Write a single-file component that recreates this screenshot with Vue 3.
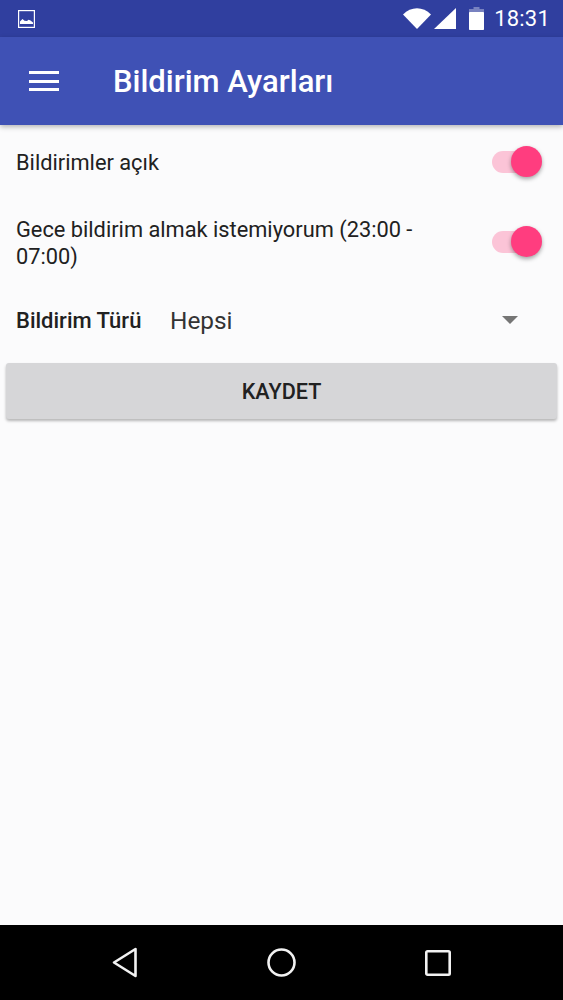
<script setup>
const settings = [
  { id: 1, label: 'Bildirimler açık' },
  { id: 2, label: 'Gece bildirim almak istemiyorum (23:00 - 07:00)' }
]
</script>

<template>
  <div class="screen">
    <div class="status">
      <svg class="pic" viewBox="0 0 17 18" width="17" height="18">
        <rect x="0.6" y="0.6" width="15.8" height="16.8" fill="none" stroke="#fff" stroke-width="1.2" />
        <path d="M2 14 V11.5 L4.5 9 L6.5 10.8 L9 11 L10.5 9.8 L12.5 10.5 L15 12.5 V14 Z" fill="#fff" />
      </svg>
      <div class="status-right">
        <svg class="wifi" viewBox="0 0 28 21" width="28" height="21">
          <path d="M0 6.5 C8 -2 20 -2 28 6.5 L14 21 Z" fill="#fff" />
        </svg>
        <svg class="signal" viewBox="0 0 22 21" width="22" height="21">
          <path d="M22 0 V21 H0 Z" fill="#fff" />
        </svg>
        <svg class="battery" viewBox="0 0 15 23" width="15" height="23">
          <path d="M4.5 0 H10.5 V2 H15 V7 H0 V2 H4.5 Z" fill="#fff" fill-opacity="0.35" />
          <rect x="0" y="5" width="15" height="18" rx="0.8" fill="#fff" />
        </svg>
        <span class="time">18:31</span>
      </div>
    </div>

    <header class="toolbar">
      <div class="burger"><i></i><i></i><i></i></div>
      <h1 class="title">Bildirim Ayarları</h1>
    </header>

    <main class="content">
      <div v-for="s in settings" :key="s.id" class="row" :class="'row-' + s.id">
        <span class="label">{{ s.label }}</span>
        <span class="switch"><span class="thumb"></span></span>
      </div>

      <div class="spinner-row">
        <span class="spinner-label">Bildirim Türü</span>
        <span class="spinner-value">Hepsi</span>
        <span class="arrow"></span>
      </div>

      <button class="save">KAYDET</button>
    </main>

    <nav class="navbar">
      <svg viewBox="0 0 26 31" width="26" height="31">
        <path d="M23.5 2 V29 L2 15.5 Z" fill="none" stroke="#f2f2f2" stroke-width="2.6" stroke-linejoin="round" />
      </svg>
      <svg viewBox="0 0 29 29" width="29" height="29">
        <circle cx="14.5" cy="14.5" r="13" fill="none" stroke="#f2f2f2" stroke-width="2.6" />
      </svg>
      <svg viewBox="0 0 26 26" width="26" height="26">
        <rect x="1.3" y="1.3" width="23.4" height="23.4" rx="1.2" fill="none" stroke="#f2f2f2" stroke-width="2.6" />
      </svg>
    </nav>
  </div>
</template>

<style>
html, body { margin: 0; padding: 0; }
</style>

<style scoped>
.screen {
  width: 563px;
  height: 1000px;
  display: flex;
  flex-direction: column;
  background: #fbfbfc;
  font-family: Roboto, "Liberation Sans", sans-serif;
  overflow: hidden;
}
.status {
  height: 37px;
  flex: none;
  background: #303f9f;
  display: flex;
  align-items: center;
  justify-content: space-between;
  padding: 0 13px 0 18px;
}
.status-right {
  display: flex;
  align-items: center;
}
.wifi { margin-right: 3px; }
.signal { margin-right: 13px; }
.battery { margin-right: 10px; }
.time {
  color: #fff;
  font-size: 22px;
  line-height: 37px;
  letter-spacing: 0.2px;
}
.toolbar {
  height: 88px;
  flex: none;
  background: #3f51b5;
  display: flex;
  align-items: center;
  padding-left: 29px;
  box-shadow: 0 2px 5px rgba(0, 0, 0, 0.28);
  position: relative;
}
.burger {
  width: 30px;
  display: flex;
  flex-direction: column;
  gap: 5.5px;
  margin-right: 54px;
}
.burger i {
  display: block;
  height: 3px;
  background: #fff;
}
.title {
  margin: 0;
  color: #fff;
  font-size: 31px;
  font-weight: 500;
  line-height: 36px;
  padding-top: 1px;
}
.content {
  flex: 1;
  display: flex;
  flex-direction: column;
}
.row {
  display: flex;
  align-items: center;
  justify-content: space-between;
  padding: 0 27px 0 16px;
  color: #212121;
}
.row-1 { height: 74px; }
.row-2 { height: 60px; margin-top: 14px; }
.row-2 .switch { margin-bottom: 3px; }
.label {
  font-size: 21.8px;
  line-height: 27px;
  width: 440px;
}
.switch {
  width: 44px;
  height: 22px;
  border-radius: 11px;
  background: #fbc4d7;
  position: relative;
  flex: none;
}
.thumb {
  position: absolute;
  right: -6px;
  top: -5px;
  width: 31px;
  height: 31px;
  border-radius: 50%;
  background: #ff3d7f;
  box-shadow: 0 2px 4px rgba(0, 0, 0, 0.35);
}
.spinner-row {
  height: 66px;
  margin-top: 14px;
  display: flex;
  align-items: center;
  padding-left: 16px;
  color: #212121;
}
.spinner-label {
  font-size: 22px;
  font-weight: 500;
  width: 154px;
}
.spinner-value {
  font-size: 24.4px;
  color: #333;
  flex: 1;
}
.arrow {
  width: 0;
  height: 0;
  border-left: 8px solid transparent;
  border-right: 8px solid transparent;
  border-top: 8px solid #757575;
  margin-right: 45px;
}
.save {
  margin: 10px 6px 0;
  height: 56px;
  flex: none;
  border: none;
  border-radius: 3px;
  background: #d6d6d8;
  color: #212121;
  font-family: inherit;
  font-size: 21.6px;
  font-weight: 500;
  box-shadow: 0 2px 3px rgba(0, 0, 0, 0.28);
}
.navbar {
  height: 75px;
  flex: none;
  background: #000;
  display: flex;
  align-items: center;
  padding-left: 112px;
}
.navbar svg:nth-child(1) { margin-right: 129px; }
.navbar svg:nth-child(2) { margin-right: 129px; }
</style>
